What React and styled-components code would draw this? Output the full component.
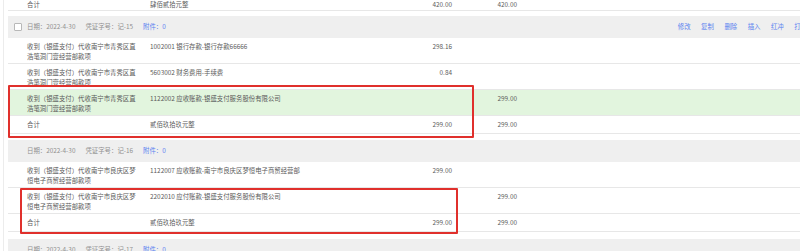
import React from 'react';
import styled, { createGlobalStyle } from 'styled-components';

const GlobalStyle = createGlobalStyle`
  html, body {
    margin: 0;
    padding: 0;
    background: #ffffff;
    overflow: hidden;
  }
  body {
    font-family: "Noto Sans CJK SC", "Noto Sans", sans-serif;
    font-size: 6.4px;
    color: #5a5a5a;
  }
`;

const Page = styled.div`
  width: 800px;
  height: 251px;
  overflow: hidden;
  position: relative;
`;

const Frame = styled.div`
  margin-left: 3px;
  padding-left: 4px;
  border-left: 1px solid #ececec;
  width: 820px;
`;

const Block = styled.div`
  position: relative;
  margin-bottom: ${(p) => p.$gap ?? 6}px;
`;

const Header = styled.div`
  display: flex;
  align-items: center;
  height: 22px;
  background: #efefef;
  line-height: 10px;
  padding-right: 21px;
`;

const CheckSlot = styled.div`
  width: 19px;
  display: flex;
  justify-content: center;
  padding-left: 1px;
  box-sizing: border-box;
`;

const CheckBox = styled.span`
  width: 6px;
  height: 6px;
  border: 1px solid #b8b8b8;
  border-radius: 1px;
  background: #ffffff;
`;

const Meta = styled.span`
  color: ${(p) => (p.$link ? '#5b82f0' : '#8f8f8f')};
  margin-right: 10px;
`;

const Actions = styled.div`
  margin-left: auto;
  display: flex;
  gap: 10.5px;
`;

const Action = styled.span`
  color: #5b82f0;
`;

const Row = styled.div`
  display: flex;
  align-items: flex-start;
  box-sizing: border-box;
  height: ${(p) => p.$h || 26}px;
  padding-top: ${(p) => p.$pt ?? 4}px;
  line-height: 10px;
  background: ${(p) => (p.$green ? '#e2f5de' : '#ffffff')};
  border-bottom: 1px solid #e7e7e7;
`;

const Summary = styled.div`
  width: 112px;
  padding-left: 19px;
  flex-shrink: 0;
`;

const Account = styled.div`
  width: 228px;
  padding-left: 11px;
  flex-shrink: 0;
  white-space: nowrap;
`;

const Amount = styled.div`
  width: ${(p) => p.$w}px;
  padding-right: 8px;
  box-sizing: border-box;
  text-align: right;
  flex-shrink: 0;
`;

const Mark = styled.div`
  position: absolute;
  left: ${(p) => p.$x}px;
  top: ${(p) => p.$y}px;
  width: ${(p) => p.$w}px;
  height: ${(p) => p.$h}px;
  border: 2px solid #e0302c;
  border-radius: 1px;
  box-sizing: border-box;
  pointer-events: none;
`;

const Line = ({ summary, account, debit, credit, green }) => (
  <Row $green={green}>
    <Summary>{summary}</Summary>
    <Account>{account}</Account>
    <Amount $w={82}>{debit}</Amount>
    <Amount $w={65}>{credit}</Amount>
  </Row>
);

const Total = ({ words, amount }) => (
  <Row $h={18} $pt={4}>
    <Summary>合计</Summary>
    <Account>{words}</Account>
    <Amount $w={82}>{amount}</Amount>
    <Amount $w={65}>{amount}</Amount>
  </Row>
);

const Voucher = ({ no, checkbox, actions, children, mark, gap }) => (
  <Block $gap={gap}>
    <Header>
      <CheckSlot>{checkbox && <CheckBox />}</CheckSlot>
      <Meta>日期：2022-4-30</Meta>
      <Meta>凭证字号：记-{no}</Meta>
      <Meta $link>附件：0</Meta>
      {actions && (
        <Actions>
          {['修改', '复制', '删除', '插入', '红冲', '打印'].map((a) => (
            <Action key={a}>{a}</Action>
          ))}
        </Actions>
      )}
    </Header>
    {children}
    {mark && <Mark $x={mark[0]} $y={mark[1]} $w={mark[2]} $h={mark[3]} />}
  </Block>
);

const qingxiu = '收到（银盛支付）代收南宁市青秀区直浩笔洞门壹经营部款项';
const liangqing = '收到（银盛支付）代收南宁市良庆区梦恒电子商贸经营部款项';

export default function App() {
  return (
    <>
      <GlobalStyle />
      <Page>
        <Frame>
          <Block $gap={5}>
            <Row $h={11} $pt={0}>
              <Summary>合计</Summary>
              <Account>肆佰贰拾元整</Account>
              <Amount $w={82}>420.00</Amount>
              <Amount $w={65}>420.00</Amount>
            </Row>
          </Block>
          <Voucher no={15} checkbox actions mark={[0, 69, 466, 53]}>
            <Line summary={qingxiu} account="1002001 银行存款-银行存款66666" debit="298.16" />
            <Line summary={qingxiu} account="5603002 财务费用-手续费" debit="0.84" />
            <Line summary={qingxiu} account="1122002 应收账款-银盛支付服务股份有限公司" credit="299.00" green />
            <Total words="贰佰玖拾玖元整" amount="299.00" />
          </Voucher>
          <Voucher no={16} mark={[12, 48, 438, 46]} gap={7}>
            <Line summary={liangqing} account="1122007 应收账款-南宁市良庆区梦恒电子商贸经营部" debit="299.00" />
            <Line summary={liangqing} account="2202010 应付账款-银盛支付服务股份有限公司" credit="299.00" />
            <Total words="贰佰玖拾玖元整" amount="299.00" />
          </Voucher>
          <Voucher no={17} />
        </Frame>
      </Page>
    </>
  );
}
